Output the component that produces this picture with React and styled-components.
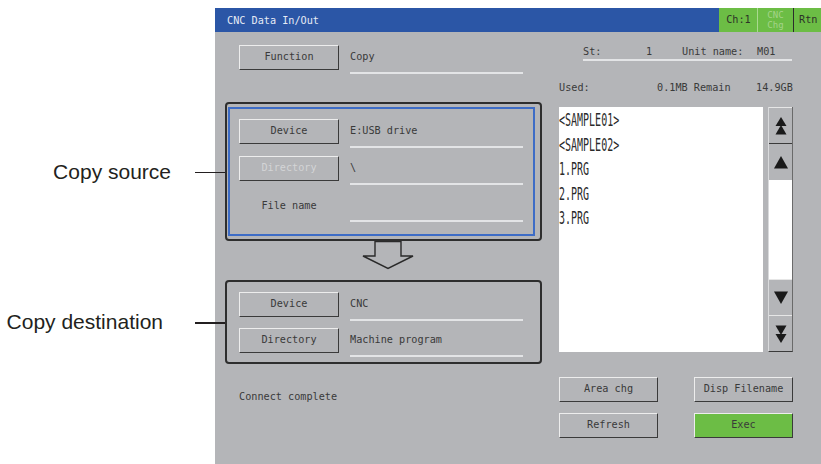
import React from 'react';
import styled, { createGlobalStyle } from 'styled-components';

const GlobalStyle = createGlobalStyle`
  html, body { margin: 0; padding: 0; background: #ffffff; }
  body { width: 821px; height: 464px; overflow: hidden; }
`;

const PANEL = '#b4b5b8';
const INK = '#3a3a3a';

const Page = styled.div`
  display: flex;
  width: 821px;
  height: 464px;
  background: #ffffff;
`;

const Callouts = styled.div`
  width: 215px;
  flex: none;
  display: flex;
  flex-direction: column;
  padding-top: 160px;
  gap: 126px;
  box-sizing: border-box;
`;

const CalloutLabel = styled.div`
  font-family: "Liberation Sans", Arial, sans-serif;
  font-size: 21px;
  line-height: 24px;
  color: #231f20;
  text-align: right;
  padding-right: ${p => p.$inset}px;
`;

const Screen = styled.div`
  width: 606px;
  height: 456px;
  margin-top: 8px;
  flex: none;
  background: ${PANEL};
  display: flex;
  flex-direction: column;
  font-family: "DejaVu Sans Mono", "Liberation Mono", monospace;
  font-size: 10.2px;
  color: ${INK};
`;

const TitleBar = styled.div`
  height: 24px;
  flex: none;
  display: flex;
  background: #2b56a6;
`;

const Title = styled.div`
  flex: 1;
  display: flex;
  align-items: center;
  padding-left: 12px;
  color: #e6ebf5;
`;

const StatusCell = styled.div`
  box-sizing: border-box;
  width: ${p => p.$w}px;
  background: #6cbd45;
  display: flex;
  align-items: center;
  justify-content: ${p => (p.$left ? 'flex-start' : 'center')};
  padding-left: ${p => (p.$left ? 5 : 0)}px;
  text-align: center;
  border-left: 1px solid ${p => p.$sep || '#6cbd45'};
  color: ${p => (p.$dim ? '#a4d489' : '#2c3328')};
  font-size: ${p => (p.$small ? 9 : 10.2)}px;
  line-height: ${p => (p.$small ? '10px' : '14px')};
`;

const Body = styled.div`
  flex: 1;
  display: flex;
  gap: 17px;
  padding: 13px 0 0 10px;
`;

const LeftCol = styled.div`
  width: 317px;
  flex: none;
  display: flex;
  flex-direction: column;
`;

const RightCol = styled.div`
  width: 234px;
  flex: none;
  display: flex;
  flex-direction: column;
`;

const Row = styled.div`
  display: flex;
  align-items: flex-start;
  gap: 11px;
  padding-left: ${p => p.$pad || 0}px;
`;

const Button = styled.button`
  box-sizing: border-box;
  width: ${p => p.$w || 100}px;
  height: 25px;
  flex: none;
  margin: 0;
  padding: 0;
  font: inherit;
  line-height: 1;
  color: ${p => (p.$dim ? '#d3d4d6' : INK)};
  background: ${p => (p.$green ? '#6cbd45' : PANEL)};
  border-style: solid;
  border-width: 1.5px 1px 1.5px 1px;
  border-color: #ededed #3a3a3a #3a3a3a #ededed;
  cursor: default;
`;

const LabelBox = styled.div`
  width: 100px;
  height: 25px;
  flex: none;
  display: flex;
  align-items: center;
  justify-content: center;
`;

const Field = styled.div`
  box-sizing: border-box;
  width: 173px;
  height: 29px;
  padding-top: 5px;
  line-height: 14px;
  border-bottom: 2px solid #e3e4e6;
  white-space: pre;
`;

const GroupBox = styled.div`
  position: relative;
  border: 2px solid #2e2e2e;
  border-radius: 4px;
  margin-top: ${p => p.$mt || 0}px;
  padding: ${p => p.$pad};
  display: flex;
  flex-direction: column;
  gap: ${p => p.$gap || 0}px;

  &::before {
    content: '';
    position: absolute;
    left: -32px;
    top: 50%;
    width: 30px;
    height: 1.5px;
    background: #231f20;
  }
`;

const BlueFrame = styled.div`
  border: 2px solid #3d6cc6;
  padding: 10px 0 12px 9px;
  display: flex;
  flex-direction: column;
  gap: 8px;
`;

const ArrowRow = styled.div`
  height: 39px;
  padding-left: 136px;
  display: flex;
  align-items: flex-start;
`;

const StatusText = styled.div`
  margin-top: 26px;
  padding-left: 14px;
  line-height: 14px;
`;

const InfoRow = styled.div`
  box-sizing: border-box;
  height: 16px;
  margin-left: 24px;
  margin-right: 1px;
  display: flex;
  line-height: 14px;
  border-bottom: 2px solid #e3e4e6;
`;

const Cell = styled.span`
  width: ${p => (p.$w ? `${p.$w}px` : 'auto')};
  flex: none;
  white-space: pre;
`;

const UsedRow = styled.div`
  margin-top: 20px;
  display: grid;
  grid-template-columns: 98px 99px 1fr;
  line-height: 14px;
  white-space: pre;
`;

const ListArea = styled.div`
  margin-top: 12px;
  height: 245px;
  display: flex;
  gap: 5px;
`;

const FileList = styled.div`
  width: 204px;
  flex: none;
  background: #ffffff;
  display: flex;
  flex-direction: column;
  overflow: hidden;
`;

const FileItem = styled.div`
  height: 24.5px;
  flex: none;
  display: flex;
  align-items: center;
  font-size: 10px;
  color: #2a2a2a;
  transform: scaleY(1.85);
  white-space: pre;
`;

const Scrollbar = styled.div`
  box-sizing: border-box;
  width: 25px;
  flex: none;
  display: flex;
  flex-direction: column;
  border-left: 1px solid #d9dadc;
  border-right: 1px solid #6a6a6a;
  border-bottom: 1px solid #3a3a3a;
`;

const ScrollBtn = styled.div`
  box-sizing: border-box;
  height: ${p => p.$h}px;
  flex: none;
  background: ${PANEL};
  border-top: 1px solid ${p => (p.$darkTop ? '#3a3a3a' : '#e6e6e6')};
  display: flex;
  align-items: center;
  justify-content: center;
`;

const Track = styled.div`
  flex: 1;
  background: #ffffff;
`;

const ActionGrid = styled.div`
  margin-top: 25px;
  display: grid;
  grid-template-columns: 99px 99px;
  column-gap: 36px;
  row-gap: 11px;
`;

const Tri = ({ dir = 'up', double = false }) => {
  if (double) {
    const up = dir === 'up';
    return (
      <svg width="12" height="18" viewBox="0 0 12 18">
        {up ? (
          <>
            <polygon points="6,0 11.5,9 0.5,9" fill="#1a1a1a" />
            <polygon points="6,8 11.5,17.5 0.5,17.5" fill="#1a1a1a" />
          </>
        ) : (
          <>
            <polygon points="0.5,0.5 11.5,0.5 6,10" fill="#1a1a1a" />
            <polygon points="0.5,9 11.5,9 6,18" fill="#1a1a1a" />
          </>
        )}
      </svg>
    );
  }
  return (
    <svg width="14" height="13" viewBox="0 0 14 13">
      {dir === 'up' ? (
        <polygon points="7,0 14,12.5 0,12.5" fill="#1a1a1a" />
      ) : (
        <polygon points="0,0.5 14,0.5 7,13" fill="#1a1a1a" />
      )}
    </svg>
  );
};

const DownArrow = () => (
  <svg width="54" height="29" viewBox="0 0 54 29">
    <polygon
      points="14,0.5 40,0.5 40,15 52,15 27,27.5 2,15 14,15"
      fill={PANEL}
      stroke="#2a2a2a"
      strokeWidth="1.4"
      strokeLinejoin="miter"
    />
  </svg>
);

const files = ['<SAMPLE01>', '<SAMPLE02>', '1.PRG', '2.PRG', '3.PRG'];

export default function App() {
  return (
    <>
      <GlobalStyle />
      <Page>
        <Callouts>
          <CalloutLabel $inset={44}>Copy source</CalloutLabel>
          <CalloutLabel $inset={52}>Copy destination</CalloutLabel>
        </Callouts>
        <Screen>
          <TitleBar>
            <Title>CNC Data In/Out</Title>
            <StatusCell $w={38}>Ch:1</StatusCell>
            <StatusCell $w={36} $dim $small $sep="#a9d98f">
              CNC
              <br />
              Chg
            </StatusCell>
            <StatusCell $w={28} $left $sep="#2c2c2c">Rtn</StatusCell>
          </TitleBar>
          <Body>
            <LeftCol>
              <Row $pad={14}>
                <Button>Function</Button>
                <Field>Copy</Field>
              </Row>
              <GroupBox $mt={28} $pad="3px 5px 3px 1px">
                <BlueFrame>
                  <Row>
                    <Button>Device</Button>
                    <Field>E:USB drive</Field>
                  </Row>
                  <Row>
                    <Button $dim>Directory</Button>
                    <Field>\</Field>
                  </Row>
                  <Row>
                    <LabelBox>File name</LabelBox>
                    <Field />
                  </Row>
                </BlueFrame>
              </GroupBox>
              <ArrowRow>
                <DownArrow />
              </ArrowRow>
              <GroupBox $pad="10px 0 5px 12px" $gap={7}>
                <Row>
                  <Button>Device</Button>
                  <Field>CNC</Field>
                </Row>
                <Row>
                  <Button>Directory</Button>
                  <Field>Machine program</Field>
                </Row>
              </GroupBox>
              <StatusText>Connect complete</StatusText>
            </LeftCol>
            <RightCol>
              <InfoRow>
                <Cell $w={63}>St:</Cell>
                <Cell $w={36}>1</Cell>
                <Cell $w={75}>Unit name:</Cell>
                <Cell>M01</Cell>
              </InfoRow>
              <UsedRow>
                <span>Used:</span>
                <span>0.1MB Remain</span>
                <span>14.9GB</span>
              </UsedRow>
              <ListArea>
                <FileList>
                  {files.map(f => (
                    <FileItem key={f}>{f}</FileItem>
                  ))}
                </FileList>
                <Scrollbar>
                  <ScrollBtn $h={36}>
                    <Tri dir="up" double />
                  </ScrollBtn>
                  <ScrollBtn $h={37} $darkTop>
                    <Tri dir="up" />
                  </ScrollBtn>
                  <Track />
                  <ScrollBtn $h={36}>
                    <Tri dir="down" />
                  </ScrollBtn>
                  <ScrollBtn $h={36}>
                    <Tri dir="down" double />
                  </ScrollBtn>
                </Scrollbar>
              </ListArea>
              <ActionGrid>
                <Button $w={99}>Area chg</Button>
                <Button $w={99}>Disp Filename</Button>
                <Button $w={99}>Refresh</Button>
                <Button $w={99} $green>Exec</Button>
              </ActionGrid>
            </RightCol>
          </Body>
        </Screen>
      </Page>
    </>
  );
}
